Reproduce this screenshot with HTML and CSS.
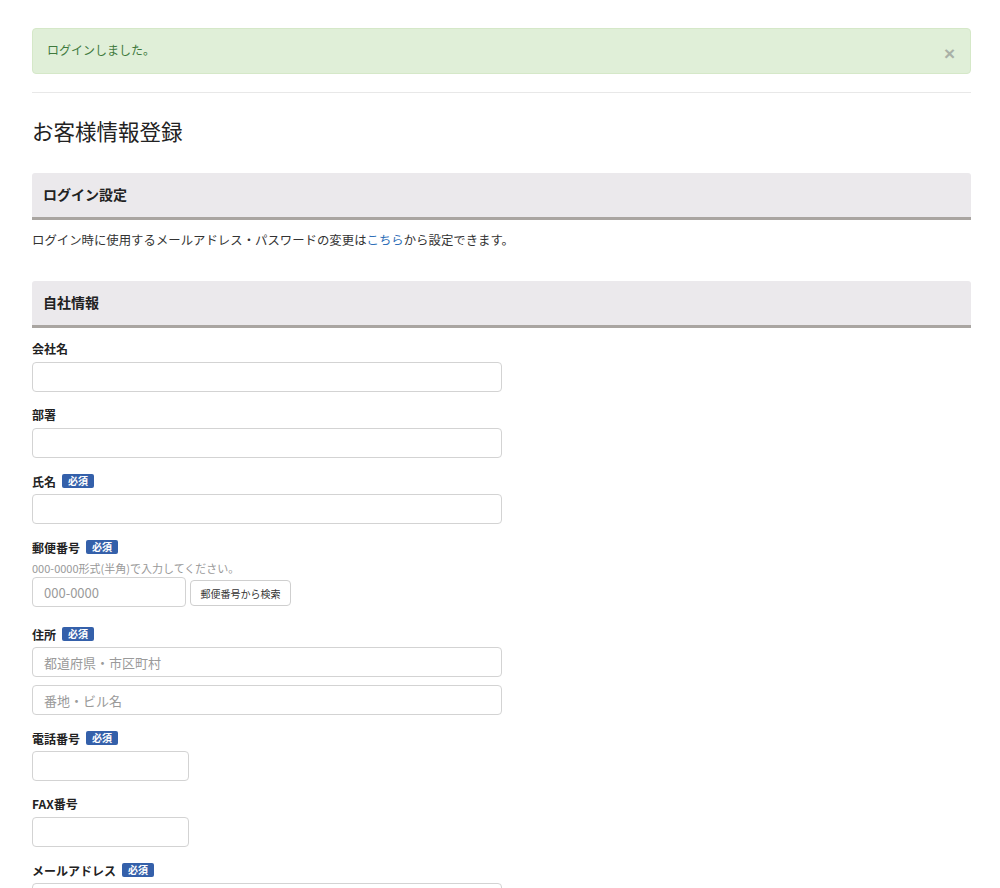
FILE: index.html
```html
<!DOCTYPE html>
<html lang="ja">
<head>
<meta charset="utf-8">
<title>お客様情報登録</title>
<link rel="stylesheet" href="styles.css">
</head>
<body>
<div class="page">
  <div class="alert">
    <span class="alert-text">ログインしました。</span>
    <span class="close">×</span>
  </div>
  <hr class="rule">
  <h1 class="title">お客様情報登録</h1>

  <h2 class="section">ログイン設定</h2>
  <p class="note">ログイン時に使用するメールアドレス・パスワードの変更は<a class="link" href="#">こちら</a>から設定できます。</p>

  <h2 class="section section-2">自社情報</h2>

  <div class="group">
    <div class="label">会社名</div>
    <input class="input wide" type="text">
  </div>
  <div class="group">
    <div class="label">部署</div>
    <input class="input wide" type="text">
  </div>
  <div class="group">
    <div class="label req">氏名<span class="badge">必須</span></div>
    <input class="input wide" type="text">
  </div>
  <div class="group zip-group">
    <div class="label req">郵便番号<span class="badge">必須</span></div>
    <div class="help">000-0000形式(半角)で入力してください。</div>
    <div class="zip-row">
      <input class="input zip" type="text" placeholder="000-0000">
      <button class="btn" type="button">郵便番号から検索</button>
    </div>
  </div>
  <div class="group">
    <div class="label req">住所<span class="badge">必須</span></div>
    <input class="input wide" type="text" placeholder="都道府県・市区町村">
    <input class="input wide second" type="text" placeholder="番地・ビル名">
  </div>
  <div class="group">
    <div class="label req">電話番号<span class="badge">必須</span></div>
    <input class="input short" type="text">
  </div>
  <div class="group">
    <div class="label">FAX番号</div>
    <input class="input short" type="text">
  </div>
  <div class="group">
    <div class="label req">メールアドレス<span class="badge">必須</span></div>
    <input class="input wide" type="text">
  </div>
</div>
</body>
</html>
```
FILE: styles.css
```css
html, body {
  margin: 0;
  padding: 0;
  background: #fff;
}
body {
  font-family: "Noto Sans CJK JP", "Liberation Sans", sans-serif;
  font-size: 12px;
  color: #333;
}
.page {
  padding: 28px 29px 40px 32px;
}
.alert {
  display: flex;
  align-items: center;
  justify-content: space-between;
  box-sizing: border-box;
  height: 46px;
  padding: 0 14px 0 14px;
  background: #e0efd8;
  border: 1px solid #d5e8c8;
  border-radius: 4px;
  color: #3f7a3d;
  font-size: 12px;
}
.alert-text {
  margin-top: -4px;
}
.close {
  font-family: "Liberation Sans", sans-serif;
  font-size: 19px;
  font-weight: bold;
  color: #a9b1a7;
  margin-top: 4px;
  margin-right: 1px;
  line-height: 1;
}
.rule {
  border: 0;
  border-top: 1px solid #e8e8e8;
  margin: 18px 0 0 0;
  height: 0;
}
.title {
  font-size: 21.5px;
  font-weight: normal;
  color: #222;
  line-height: 24px;
  margin: 26px 0 30px 0;
}
.section {
  box-sizing: border-box;
  height: 47px;
  margin: 0;
  padding: 0 11px 2px 11px;
  display: flex;
  align-items: center;
  background: #ebe9ec;
  border-bottom: 3px solid #a9a5a1;
  border-radius: 3px 3px 0 0;
  font-size: 14px;
  font-weight: bold;
  color: #222;
}
.note {
  margin: 11px 0 32px 0;
  line-height: 18px;
  font-size: 12.4px;
  color: #333;
}
.link {
  color: #2f6fb8;
  text-decoration: none;
}
.section-2 {
  margin-bottom: 11px;
}
.group {
  margin-bottom: 13px;
}
.zip-group {
  margin-bottom: 17px;
}
.label {
  display: flex;
  align-items: center;
  height: 18px;
  margin-bottom: 5px;
  font-weight: bold;
  font-size: 12px;
  color: #222;
}
.label.req {
  height: 20px;
  margin-bottom: 3px;
}
.badge {
  display: inline-block;
  margin-left: 6px;
  height: 14px;
  line-height: 14px;
  padding: 0 6px;
  background: #3460aa;
  color: #fff;
  font-size: 10px;
  font-weight: bold;
  border-radius: 2px;
}
.help {
  font-size: 11px;
  line-height: 16px;
  color: #999;
  margin-bottom: 1px;
}
.input {
  display: block;
  box-sizing: border-box;
  height: 30px;
  border: 1px solid #d3d3d3;
  border-radius: 4px;
  padding: 0 11px;
  font-family: "Noto Sans CJK JP", "Liberation Sans", sans-serif;
  font-size: 13px;
  color: #333;
  background: #fff;
  margin: 0;
}
.input::placeholder {
  color: #9a9a9a;
}
.wide {
  width: 470px;
}
.second {
  margin-top: 8px;
}
.short {
  width: 157px;
}
.zip-row {
  display: flex;
  align-items: flex-end;
  gap: 4px;
}
.zip {
  width: 154px;
}
.btn {
  box-sizing: border-box;
  height: 26px;
  width: 101px;
  padding: 0;
  margin-bottom: 1px;
  background: #fff;
  border: 1px solid #cfcfcf;
  border-radius: 4px;
  font-family: "Noto Sans CJK JP", "Liberation Sans", sans-serif;
  font-size: 10px;
  color: #333;
}
```
